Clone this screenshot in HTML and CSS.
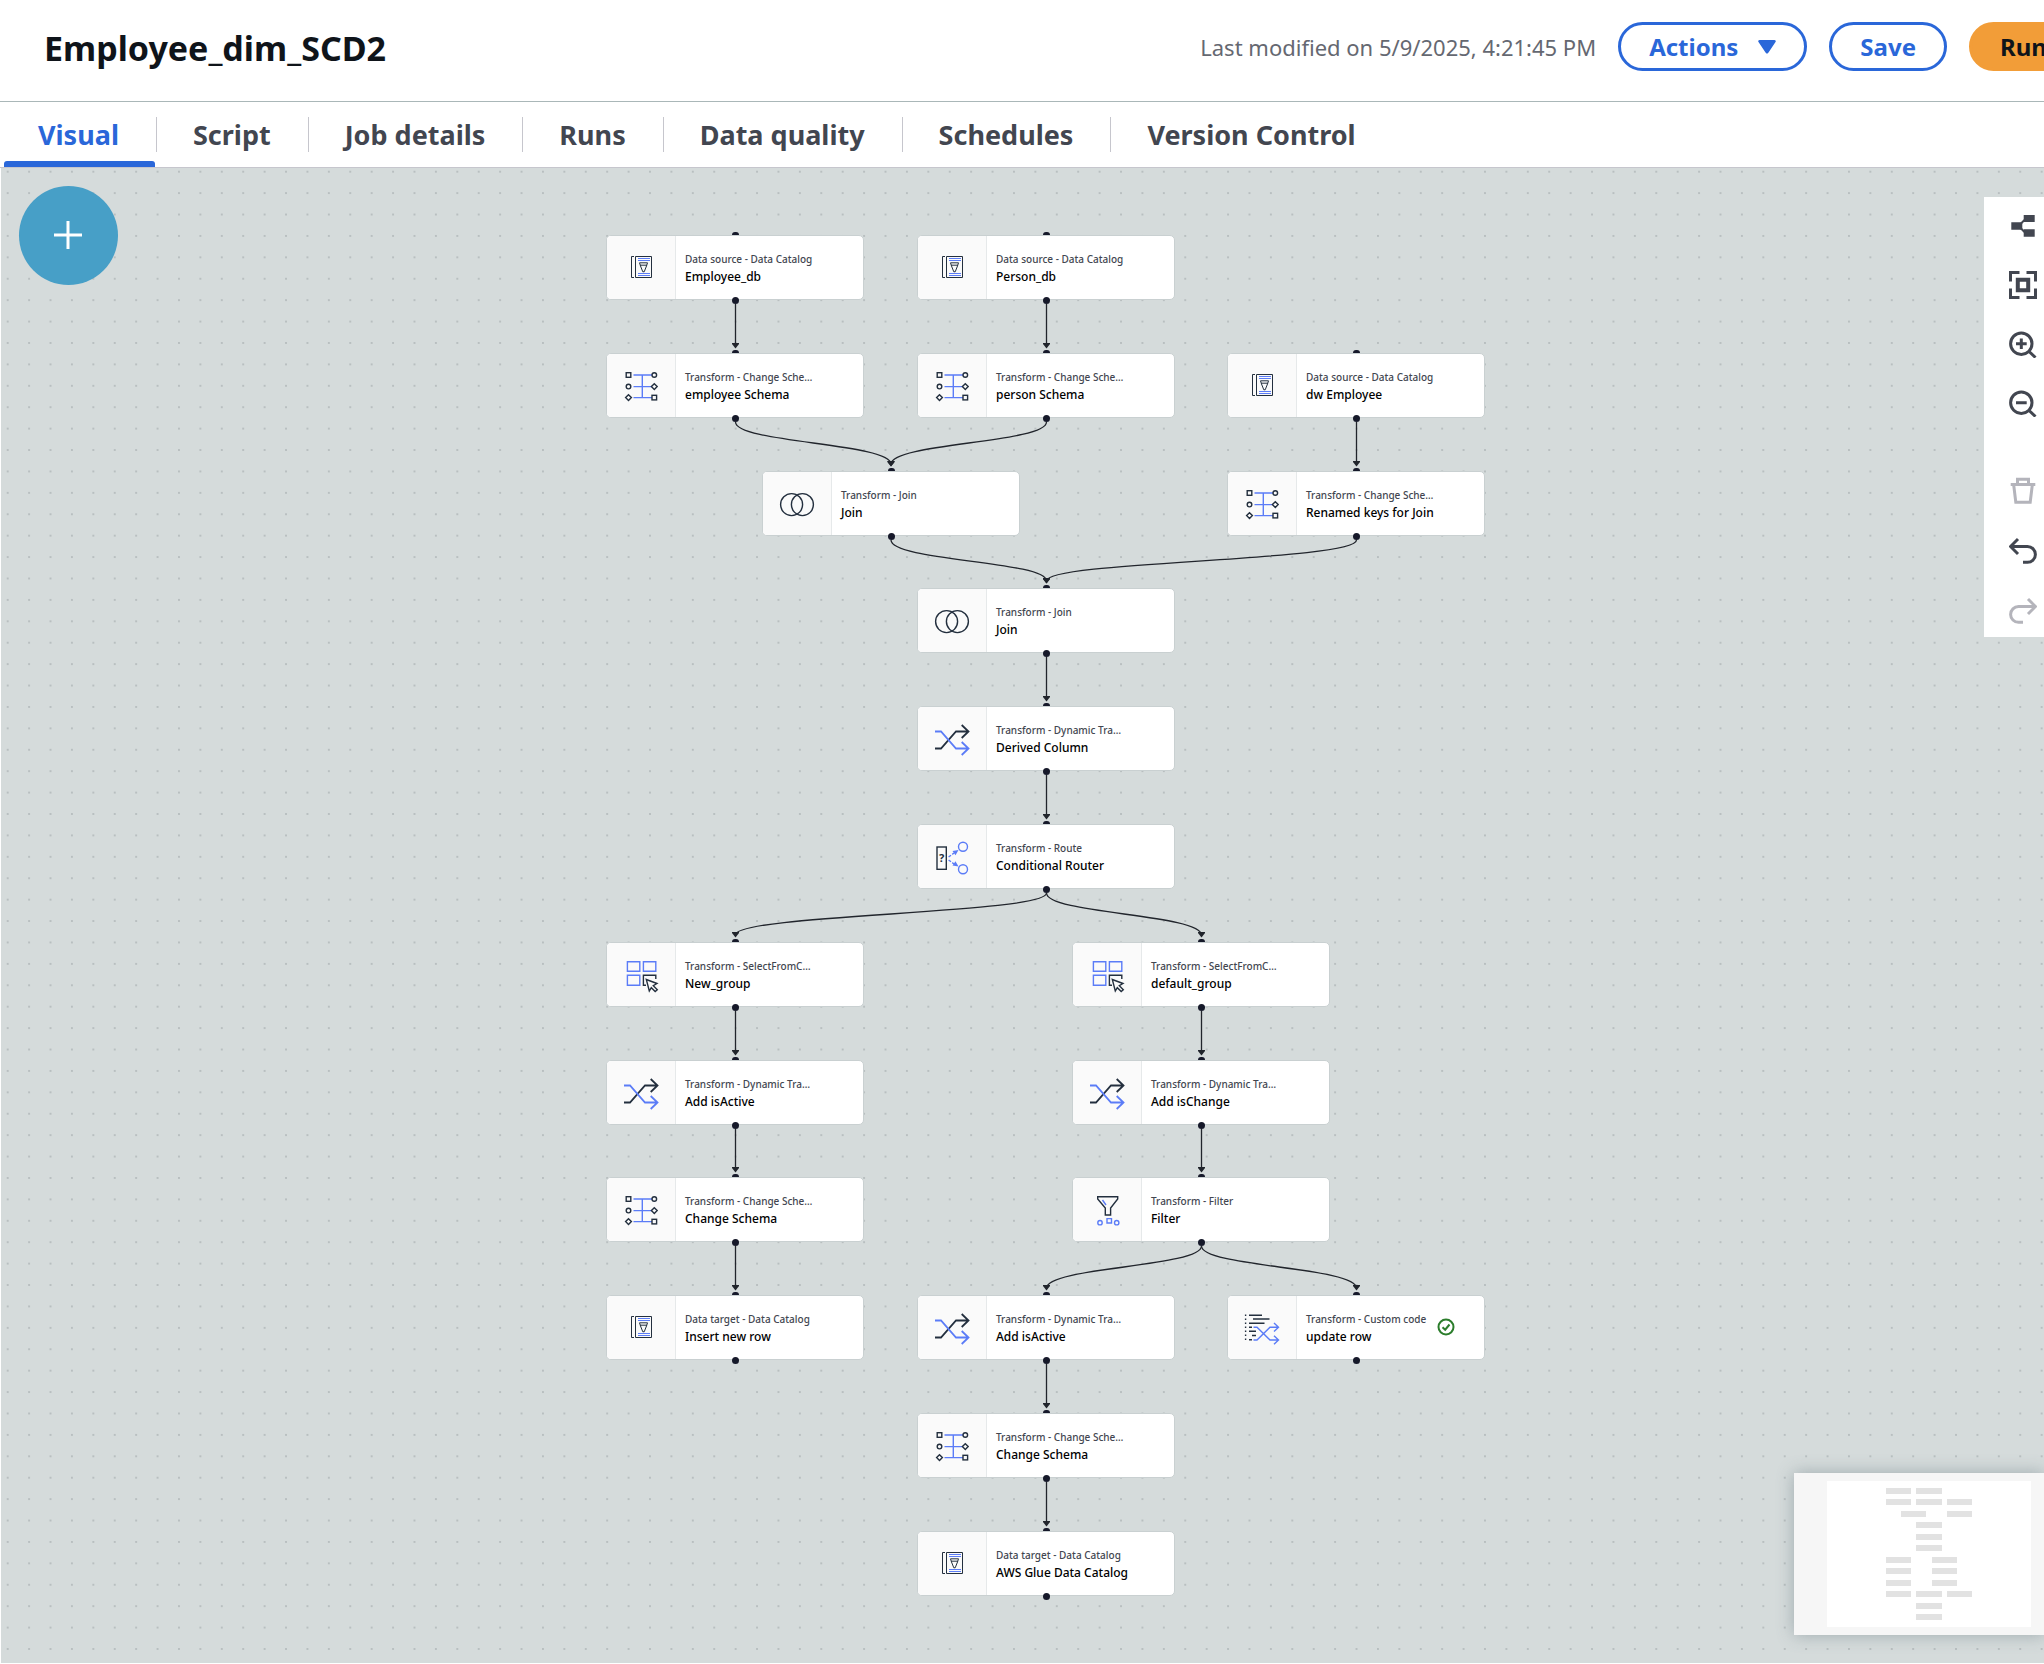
FILE: index.html
```html
<!DOCTYPE html>
<html lang="en">
<head>
<meta charset="utf-8">
<meta name="viewport" content="width=device-width, initial-scale=1">
<title>Employee_dim_SCD2</title>
<link rel="stylesheet" href="styles.css">
</head>
<body>
<svg class="sprite" aria-hidden="true">
  <defs>
    <symbol id="i-catalog" viewBox="0 0 36 36">
      <path class="ink thin" d="M11 6.500H8.500V27.500H11M12.500 6.500H28.500V27.500H12.500Z"/>
      <path class="blue thin" d="M15 8.500H27M15 10.500H27M15 23.500H27M15 25.500H27"/>
      <path class="ink thin" d="M16.500 12.800H24.500L23.500 16L21.200 21.800H19.800L17.500 16ZM17.200 15.200H23.800"/>
    </symbol>
    <symbol id="i-schema" viewBox="0 0 36 36">
      <path class="blue" d="M10.500 7H29M10.500 18.600H29M10.500 29.600H29M19.300 7V29.600"/>
      <g class="ink fillcell"><rect x="3.200" y="4.700" width="4.600" height="4.600"/><circle cx="31.300" cy="7" r="2.300"/><circle cx="5.500" cy="18.600" r="2.300"/><path d="M31.300 15.700l2.900 2.900-2.900 2.900-2.900-2.900ZM5.500 26.700l2.900 2.900-2.900 2.900-2.900-2.900Z"/><rect x="29" y="27.300" width="4.600" height="4.600"/></g>
    </symbol>
    <symbol id="i-join" viewBox="0 0 36 36">
      <g class="ink"><circle cx="12.600" cy="18.600" r="11"/><circle cx="23.400" cy="18.600" r="11"/></g>
    </symbol>
    <symbol id="i-dynamic" viewBox="0 0 36 36">
      <path class="ink bold" d="M1 27.500H7L22 10.500H34.500M27.700 4L34.500 10.500L27.700 17"/>
      <path class="blue bold" d="M1 10.500H7L22 27.500H34.500M27.700 21L34.500 27.500L27.700 34"/>
    </symbol>
    <symbol id="i-route" viewBox="0 0 36 36">
      <rect class="ink" x="3" y="8" width="9.300" height="22.300"/>
      <text class="mark" x="7.600" y="23" text-anchor="middle">?</text>
      <g class="blue"><circle cx="29" cy="7.700" r="4.500"/><circle cx="29" cy="30.300" r="4.500"/><path d="M14.600 18L20 14M14.600 21L20 25" stroke-dasharray="3 1.500"/></g>
      <path class="bluefill" d="M24.500 11L18.500 12L21.500 16.200ZM24.500 27.500L18.500 26.500L21.500 22.300Z"/>
    </symbol>
    <symbol id="i-select" viewBox="0 0 36 36">
      <path class="blue" d="M4.400 4.700H16.800V14.300H4.400ZM20.400 4.700H32.800V14.300H20.400ZM4.400 18.300H16.800V28.300H4.400Z"/>
      <path class="ink" d="M23 28.300H20.400V18.300H32.800V22"/>
      <path class="ink fillcell" d="M23.300 22.500L34 26.500L30.300 28.700L34.300 32.700L32.200 34.600L28.300 30.700L26.300 34Z"/>
    </symbol>
    <symbol id="i-filter" viewBox="0 0 36 36">
      <path class="ink" d="M8.700 4.700H28.700V7L21.600 16V23H16.300V16L8.700 7Z"/>
      <path class="blue" d="M13.500 8L17 13M18 26.600H22.500V31H18Z"/>
      <g class="blue"><circle cx="11" cy="30.700" r="2.200"/><circle cx="27.700" cy="30.700" r="2.200"/></g>
    </symbol>
    <symbol id="i-code" viewBox="0 0 36 36">
      <path class="ink" d="M5 5.300H18M9 9H25.500M5 13.300H20.500M5 17.300H8M5 21.300H12M8 25.500H12M5 29.800H8"/>
      <path class="ink" stroke-dasharray="1.400 2.600" d="M1.600 4.600V31"/>
      <path class="blue" d="M9.500 17.300H13L26 30H34M9.500 30H13L26 17.300H34M30 13L34.500 17.300L30 21.600M30 25.700L34.500 30L30 34.300"/>
    </symbol>
  </defs>
</svg>

<header class="header">
  <h1 class="title">Employee_dim_SCD2</h1>
  <div class="actions">
    <span class="modified">Last modified on 5/9/2025, 4:21:45 PM</span>
    <button class="btn" type="button">Actions
      <svg class="caret" viewBox="0 0 18 14" aria-hidden="true"><path d="M1.500 0H16.500Q18.500 .5 17.500 2L10.500 12.500Q9 14.800 7.500 12.500L.5 2Q-.5 .5 1.500 0Z"/></svg>
    </button>
    <button class="btn" type="button">Save</button>
    <button class="btn btn-run" type="button">Run</button>
  </div>
</header>

<nav class="tabs" aria-label="Job">
  <a class="tab active" href="#visual" aria-current="page">Visual</a>
  <a class="tab" href="#script">Script</a>
  <a class="tab" href="#details">Job details</a>
  <a class="tab" href="#runs">Runs</a>
  <a class="tab" href="#quality">Data quality</a>
  <a class="tab" href="#schedules">Schedules</a>
  <a class="tab" href="#version">Version Control</a>
</nav>

<main class="canvas">
  <svg class="edges" aria-hidden="true">
    <defs>
      <pattern id="dots" x="-4" y="-7" width="21.410" height="21.410" patternUnits="userSpaceOnUse"><circle cx="10.700" cy="10.700" r=".75"/></pattern>
      <marker id="arrow" viewBox="0 0 8 6" refX="4" refY="3" markerWidth="8" markerHeight="6" markerUnits="userSpaceOnUse"><path d="M.5 0H7.500V1L4 5.500L.5 1Z"/></marker>
    </defs>
    <rect class="dots" width="100%" height="100%" fill="url(#dots)"/>
    <g class="lines" marker-end="url(#arrow)">
      <path d="M734.500 136V178"/>
      <path d="M1045.500 136V178"/>
      <path d="M734.500 254C734.500 275 890 275 890 296"/>
      <path d="M1045.500 254C1045.500 275 890 275 890 296"/>
      <path d="M1355.500 254V296"/>
      <path d="M890 372C890 393 1045.500 393 1045.500 413"/>
      <path d="M1355.500 372C1355.500 393 1045.500 393 1045.500 413"/>
      <path d="M1045.500 489V531"/>
      <path d="M1045.500 607V649"/>
      <path d="M1045.500 725C1045.500 746 734.500 746 734.500 767"/>
      <path d="M1045.500 725C1045.500 746 1200.500 746 1200.500 767"/>
      <path d="M734.500 843V885"/>
      <path d="M1200.500 843V885"/>
      <path d="M734.500 961V1002"/>
      <path d="M1200.500 961V1002"/>
      <path d="M734.500 1078V1120"/>
      <path d="M1200.500 1078C1200.500 1099 1045.500 1099 1045.500 1120"/>
      <path d="M1200.500 1078C1200.500 1099 1355.500 1099 1355.500 1120"/>
      <path d="M1045.500 1196V1238"/>
      <path d="M1045.500 1314V1356"/>
    </g>
  </svg>

  <article class="node c1 r1"><div class="icon"><svg><use href="#i-catalog"/></svg></div><div class="text"><p class="kind">Data source - Data Catalog</p><p class="name">Employee_db</p></div></article>
  <article class="node c3 r1"><div class="icon"><svg><use href="#i-catalog"/></svg></div><div class="text"><p class="kind">Data source - Data Catalog</p><p class="name">Person_db</p></div></article>

  <article class="node c1 r2"><div class="icon"><svg><use href="#i-schema"/></svg></div><div class="text"><p class="kind">Transform - Change Sche…</p><p class="name">employee Schema</p></div></article>
  <article class="node c3 r2"><div class="icon"><svg><use href="#i-schema"/></svg></div><div class="text"><p class="kind">Transform - Change Sche…</p><p class="name">person Schema</p></div></article>
  <article class="node c5 r2"><div class="icon"><svg><use href="#i-catalog"/></svg></div><div class="text"><p class="kind">Data source - Data Catalog</p><p class="name">dw Employee</p></div></article>

  <article class="node c2 r3"><div class="icon"><svg><use href="#i-join"/></svg></div><div class="text"><p class="kind">Transform - Join</p><p class="name">Join</p></div></article>
  <article class="node c5 r3"><div class="icon"><svg><use href="#i-schema"/></svg></div><div class="text"><p class="kind">Transform - Change Sche…</p><p class="name">Renamed keys for Join</p></div></article>

  <article class="node c3 r4"><div class="icon"><svg><use href="#i-join"/></svg></div><div class="text"><p class="kind">Transform - Join</p><p class="name">Join</p></div></article>
  <article class="node c3 r5"><div class="icon"><svg><use href="#i-dynamic"/></svg></div><div class="text"><p class="kind">Transform - Dynamic Tra…</p><p class="name">Derived Column</p></div></article>
  <article class="node c3 r6"><div class="icon"><svg><use href="#i-route"/></svg></div><div class="text"><p class="kind">Transform - Route</p><p class="name">Conditional Router</p></div></article>

  <article class="node c1 r7"><div class="icon"><svg><use href="#i-select"/></svg></div><div class="text"><p class="kind">Transform - SelectFromC…</p><p class="name">New_group</p></div></article>
  <article class="node c4 r7"><div class="icon"><svg><use href="#i-select"/></svg></div><div class="text"><p class="kind">Transform - SelectFromC…</p><p class="name">default_group</p></div></article>

  <article class="node c1 r8"><div class="icon"><svg><use href="#i-dynamic"/></svg></div><div class="text"><p class="kind">Transform - Dynamic Tra…</p><p class="name">Add isActive</p></div></article>
  <article class="node c4 r8"><div class="icon"><svg><use href="#i-dynamic"/></svg></div><div class="text"><p class="kind">Transform - Dynamic Tra…</p><p class="name">Add isChange</p></div></article>

  <article class="node c1 r9"><div class="icon"><svg><use href="#i-schema"/></svg></div><div class="text"><p class="kind">Transform - Change Sche…</p><p class="name">Change Schema</p></div></article>
  <article class="node c4 r9"><div class="icon"><svg><use href="#i-filter"/></svg></div><div class="text"><p class="kind">Transform - Filter</p><p class="name">Filter</p></div></article>

  <article class="node c1 r10"><div class="icon"><svg><use href="#i-catalog"/></svg></div><div class="text"><p class="kind">Data target - Data Catalog</p><p class="name">Insert new row</p></div></article>
  <article class="node c3 r10"><div class="icon"><svg><use href="#i-dynamic"/></svg></div><div class="text"><p class="kind">Transform - Dynamic Tra…</p><p class="name">Add isActive</p></div></article>
  <article class="node c5 r10"><div class="icon"><svg><use href="#i-code"/></svg></div><div class="text"><p class="kind">Transform - Custom code</p><p class="name">update row</p></div><svg class="check" viewBox="0 0 18 18" role="img" aria-label="Ready"><circle cx="9" cy="9" r="7.500"/><path d="M5.500 9.200L8.200 11.700L12.500 6.500"/></svg></article>

  <article class="node c3 r11"><div class="icon"><svg><use href="#i-schema"/></svg></div><div class="text"><p class="kind">Transform - Change Sche…</p><p class="name">Change Schema</p></div></article>
  <article class="node c3 r12"><div class="icon"><svg><use href="#i-catalog"/></svg></div><div class="text"><p class="kind">Data target - Data Catalog</p><p class="name">AWS Glue Data Catalog</p></div></article>

  <button class="add" type="button" aria-label="Add node"><svg viewBox="0 0 28 28"><path d="M14 0V28M0 14H28"/></svg></button>

  <div class="toolbar" role="toolbar" aria-label="Canvas tools">
    <div class="group">
      <button class="tool" type="button" aria-label="Arrange"><svg viewBox="0 0 28 28"><path class="solid" d="M2.300 10.300H13.300V17.700H2.300ZM14.700 3H25.700V10H14.700ZM14.700 17.300H25.700V24.700H14.700Z"/><path class="line hair" d="M11 12.500L16 7.500M11 15.500L16 20.500"/></svg></button>
      <button class="tool" type="button" aria-label="Fit"><svg viewBox="0 0 28 28"><path class="line" d="M1.500 10.500V1.500H10.500M17.500 1.500H26.500V10.500M26.500 17.500V26.500H17.500M10.500 26.500H1.500V17.500"/><path class="line thick" d="M8.800 8.800H19.200V19.200H8.800Z"/></svg></button>
      <button class="tool" type="button" aria-label="Zoom in"><svg viewBox="0 0 28 28"><circle class="line" cx="12.300" cy="13.700" r="10.700"/><path class="line" d="M20 21.500L26.500 27.500M12.300 8.500V19M7 13.700H17.700"/></svg></button>
      <button class="tool" type="button" aria-label="Zoom out"><svg viewBox="0 0 28 28"><circle class="line" cx="12.300" cy="13.700" r="10.700"/><path class="line" d="M20 21.500L26.500 27.500M7 13.700H17.700"/></svg></button>
    </div>
    <div class="group">
      <button class="tool" type="button" aria-label="Delete" disabled><svg viewBox="0 0 28 28"><path class="line" d="M1.700 7.500H26.300M8.500 7V2.200H19.500V7M4.700 8L6.800 25.200H21.200L23.300 8"/></svg></button>
      <button class="tool" type="button" aria-label="Undo"><svg viewBox="0 0 28 28"><path class="line" d="M1.500 9.500H18.500A7.900 7.900 0 0 1 18.500 25.300H14M9 2L1.500 9.500L9 17"/></svg></button>
      <button class="tool" type="button" aria-label="Redo" disabled><svg viewBox="0 0 28 28"><path class="line" d="M26.500 9.500H9.500A7.900 7.900 0 0 0 9.500 25.300H14M19 2L26.500 9.500L19 17"/></svg></button>
    </div>
  </div>

  <svg class="minimap" viewBox="0 0 250 162" role="img" aria-label="Minimap">
    <rect class="view" x="33" y="8" width="204" height="146"/>
    <path class="mini" d="M92 15h25v6h-25zM122 15h26v6h-26zM92 26h25v6h-25zM122 26h26v6h-26zM153 26h25v6h-25zM107 38h25v6h-25zM153 38h25v6h-25zM122 49h26v6h-26zM122 61h26v6h-26zM122 72h26v6h-26zM92 84h25v6h-25zM138 84h25v6h-25zM92 95h25v6h-25zM138 95h25v6h-25zM92 107h25v6h-25zM138 107h25v6h-25zM92 118h25v6h-25zM122 118h26v6h-26zM153 118h25v6h-25zM122 130h26v6h-26zM122 141h26v6h-26z"/>
  </svg>
</main>
</body>
</html>
```
FILE: styles.css
```css
* { box-sizing: border-box; }

body {
  margin: 0;
  min-height: 100vh;
  display: flex;
  flex-direction: column;
  background: #fff;
  color: #0f141a;
  font-family: "Noto Sans", "Open Sans", sans-serif;
}

h1, p { margin: 0; }
button { font: inherit; cursor: pointer; }
.sprite { position: absolute; width: 0; height: 0; }

/* Header */
.header {
  display: flex;
  align-items: center;
  justify-content: space-between;
  height: 102px;
  padding: 0 0 6px 44px;
  border-bottom: 1px solid #aab7b8;
  overflow: hidden;
}
.title { font-size: 34px; line-height: 44px; font-weight: 700; }
.actions { display: flex; align-items: center; gap: 22px; margin: 0 -36px 2px 0; }
.modified { color: #656871; font-size: 22px; white-space: nowrap; }
.btn {
  display: flex;
  align-items: center;
  gap: 20px;
  height: 49px;
  padding: 0 28px;
  border: 3px solid #2a67d9;
  border-radius: 25px;
  background: #fff;
  color: #2a67d9;
  font-size: 24px;
  font-weight: 700;
  white-space: nowrap;
}
.caret { width: 18px; height: 14px; fill: #2a67d9; }
.btn-run { width: 111px; border-color: #f29d38; background: #f29d38; color: #0f141a; }

/* Tabs */
.tabs {
  display: flex;
  height: 66px;
  padding-left: 4px;
  border-bottom: 1px solid #c6c6cd;
}
.tab {
  position: relative;
  display: flex;
  align-items: center;
  padding: 0 38px 0 36px;
  color: #424650;
  font-size: 27px;
  font-weight: 700;
  text-decoration: none;
  white-space: nowrap;
}
.tab:not(:last-child)::after {
  content: "";
  position: absolute;
  right: 0;
  top: 15px;
  width: 1px;
  height: 35px;
  background: #c6c6cd;
}
.tab.active { padding-left: 34px; color: #2a67d9; }
.tab.active::before {
  content: "";
  position: absolute;
  left: 0;
  right: 2px;
  bottom: 0;
  height: 6px;
  border-radius: 3px 3px 0 0;
  background: #2a67d9;
}

/* Canvas */
.canvas {
  position: relative;
  flex: 1;
  min-height: 1440px;
  margin: 0 0 1px 1px;
  background: #d5dbdb;
  overflow: hidden;
}
.edges { position: absolute; inset: 0; width: 100%; height: 100%; }
#dots circle { fill: #8d9599; }
.lines path { fill: none; stroke: #21252c; stroke-width: 1.3; }
#arrow path { fill: #21252c; }

.node {
  position: absolute;
  display: flex;
  align-items: center;
  width: 258px;
  height: 65px;
  border: 1px solid #c9d0d1;
  border-radius: 5px;
  background: #fff;
}
.node::before, .node::after {
  content: "";
  position: absolute;
  left: 125px;
  width: 7px;
  background: #16192a;
}
.node::before { top: -4px; height: 3px; border-radius: 4px 4px 0 0; }
.node::after { bottom: -5px; height: 7px; border-radius: 50%; }
.icon {
  display: grid;
  place-items: center;
  align-self: stretch;
  width: 69px;
  border-right: 1px solid #e6e9ea;
  border-radius: 4px 0 0 4px;
  background: #fafafa;
}
.icon svg { width: 36px; height: 36px; }
.text { padding: 3px 0 0 9px; white-space: nowrap; }
.kind { color: #424650; font-size: 10px; line-height: 16px; font-weight: 500; }
.name { color: #000; font-size: 12px; line-height: 20px; font-weight: 500; }
.check { position: absolute; left: 209px; top: 22px; width: 18px; height: 18px; fill: none; stroke: #2b7d2b; stroke-width: 2; }

.c1 { left: 605px; }
.c2 { left: 761px; }
.c3 { left: 916px; }
.c4 { left: 1071px; }
.c5 { left: 1226px; }
.r1 { top: 67px; }
.r2 { top: 185px; }
.r3 { top: 303px; }
.r4 { top: 420px; }
.r5 { top: 538px; }
.r6 { top: 656px; }
.r7 { top: 774px; }
.r8 { top: 892px; }
.r9 { top: 1009px; }
.r10 { top: 1127px; }
.r11 { top: 1245px; }
.r12 { top: 1363px; }

/* Node icons */
.ink, .blue { fill: none; stroke: #232f3e; stroke-width: 1.4; }
.blue { stroke: #5b7cf7; }
.bold { stroke-width: 1.8; }
.thin { stroke-width: 1; }
.fillcell { fill: #fafafa; }
.bluefill { fill: #5b7cf7; }
.mark { fill: #232f3e; font-size: 11px; font-weight: 700; }

/* Floating controls */
.add {
  position: absolute;
  left: 18px;
  top: 18px;
  display: grid;
  place-items: center;
  width: 99px;
  height: 99px;
  padding: 0 1px 1px 0;
  border: 0;
  border-radius: 50%;
  background: #479fc7;
}
.add svg { width: 28px; height: 28px; stroke: #fff; stroke-width: 3; }

.toolbar {
  position: absolute;
  right: 0;
  top: 29px;
  display: flex;
  flex-direction: column;
  gap: 60px;
  width: 60px;
  padding: 15px 7px 12px 25px;
  background: #fff;
}
.group { display: flex; flex-direction: column; gap: 31px; }
.group + .group { gap: 32px; }
.tool { width: 28px; height: 28px; padding: 0; border: 0; background: none; color: #424650; }
.tool:disabled { color: #b4b4bb; }
.tool svg { display: block; width: 28px; height: 28px; }
.solid { fill: currentColor; }
.line { fill: none; stroke: currentColor; stroke-width: 3; }
.hair { stroke-width: 2; }
.thick { stroke-width: 4; }

.minimap {
  position: absolute;
  right: 0;
  bottom: 28px;
  width: 250px;
  height: 162px;
  background: #f6f6f6;
  box-shadow: 0 0 16px rgba(90, 110, 120, .45);
}
.view { fill: #fff; }
.mini { fill: #e2e2e2; }
```
